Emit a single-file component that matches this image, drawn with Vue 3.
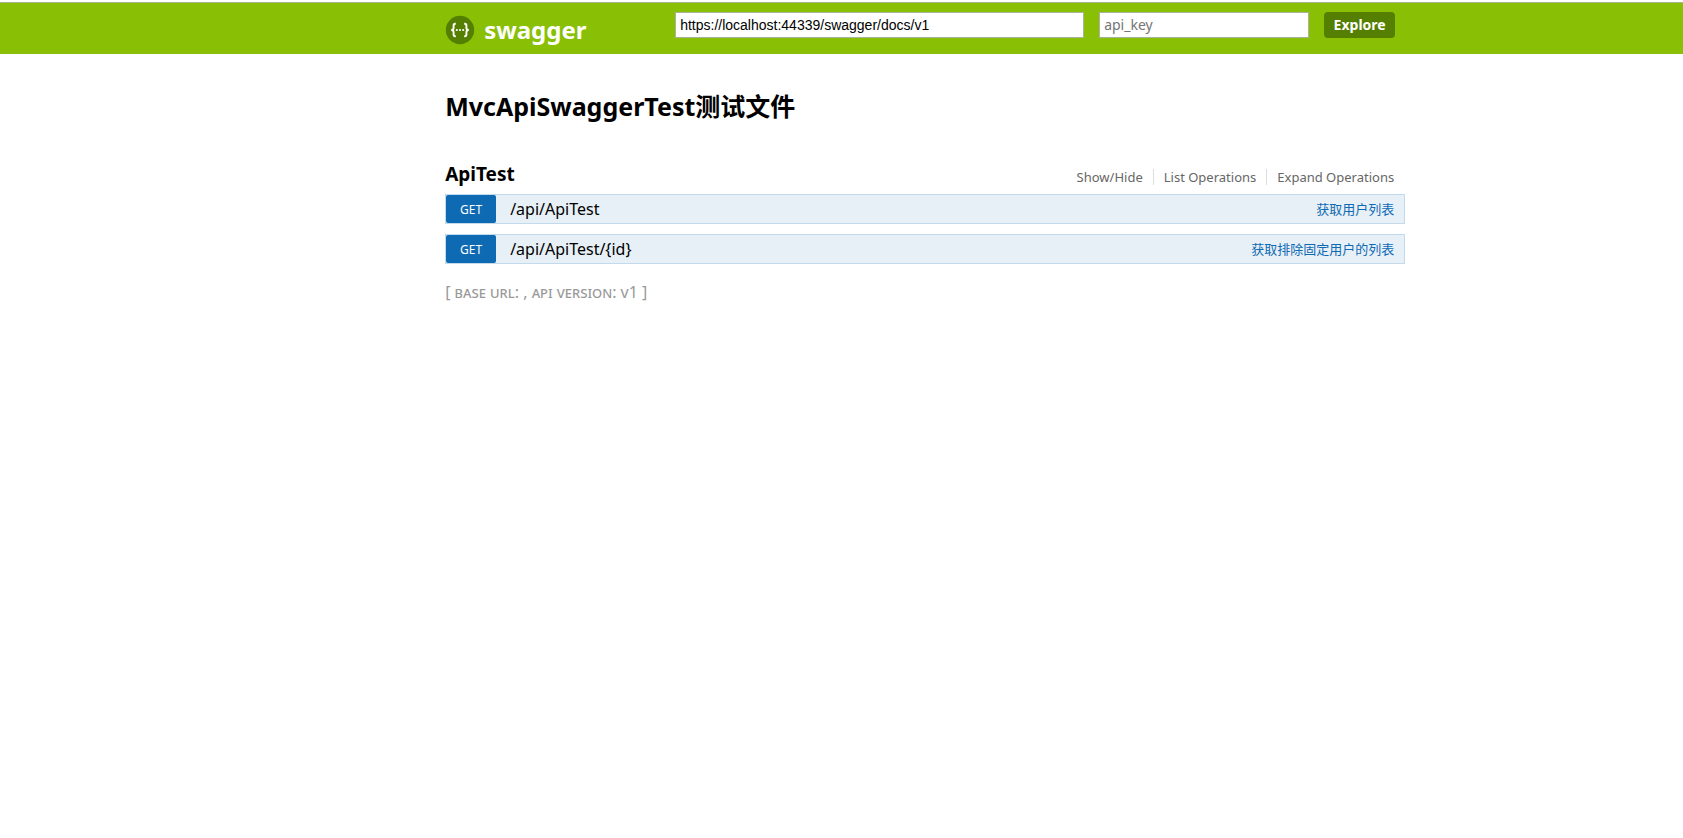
<script setup>
import { ref } from 'vue'

const url = ref('https://localhost:44339/swagger/docs/v1')
const apiKey = ref('')
const actions = ['Show/Hide', 'List Operations', 'Expand Operations']
const operations = [
  { path: '/api/ApiTest', summary: '获取用户列表' },
  { path: '/api/ApiTest/{id}', summary: '获取排除固定用户的列表' },
]
</script>

<template>
  <div class="page">
    <header class="header">
      <div class="wrap bar">
        <a class="logo" href="#">
          <svg class="mark" viewBox="0 0 30 30" aria-hidden="true">
            <circle cx="15" cy="15" r="14.2" fill="#547f00" />
            <g fill="none" stroke="#fff" stroke-width="1.9">
              <path d="M10.8 8.8H10.2Q8.6 8.8 8.6 10.6V12.8Q8.6 15 6.2 15Q8.6 15 8.6 17.2V19.4Q8.6 21.2 10.2 21.2H10.8" />
              <path d="M19.2 8.8H19.8Q21.4 8.8 21.4 10.6V12.8Q21.4 15 23.8 15Q21.4 15 21.4 17.2V19.4Q21.4 21.2 19.8 21.2H19.2" />
            </g>
            <g fill="#fff">
              <circle cx="11.8" cy="15" r="1.1" />
              <circle cx="15" cy="15" r="1.1" />
              <circle cx="18.2" cy="15" r="1.1" />
            </g>
          </svg>
          <span>swagger</span>
        </a>
        <form class="selector" @submit.prevent>
          <input v-model="url" class="field url" type="text" aria-label="Base URL" spellcheck="false" />
          <input v-model="apiKey" class="field key" type="text" placeholder="api_key" aria-label="API key" />
          <button class="explore" type="submit">Explore</button>
        </form>
      </div>
    </header>

    <main class="wrap">
      <h1>MvcApiSwaggerTest测试文件</h1>
      <section>
        <div class="heading">
          <h2><a href="#">ApiTest</a></h2>
          <ul class="options">
            <li v-for="action in actions" :key="action"><a href="#">{{ action }}</a></li>
          </ul>
        </div>
        <ul class="operations">
          <li v-for="op in operations" :key="op.path" class="operation">
            <a class="method" href="#">GET</a>
            <a class="path" href="#">{{ op.path }}</a>
            <a class="summary" href="#">{{ op.summary }}</a>
          </li>
        </ul>
      </section>
      <footer class="footer">[ <span class="caps">base url</span>: , <span class="caps">api version</span>: v1 ]</footer>
    </main>
  </div>
</template>

<style>
body {
  margin: 0;
  background: #fff;
}
</style>

<style scoped>
.page {
  font-family: "Noto Sans", "Noto Sans CJK SC", sans-serif;
  color: #000;
  padding-top: 2px;
}
.page * {
  box-sizing: border-box;
}
a {
  color: inherit;
  text-decoration: none;
}
ul {
  list-style: none;
  margin: 0;
  padding: 0;
}
.wrap {
  max-width: 960px;
  margin-left: 26.45%;
}
.header {
  background: #89bf04;
  border-top: 1px solid #a3b98a;
}
.bar {
  display: flex;
  justify-content: space-between;
  align-items: flex-start;
  height: 51px;
  padding: 9px 10px 0 0;
}
.logo {
  display: flex;
  align-items: center;
  gap: 9px;
  height: 36px;
  color: #fff;
  font-size: 24px;
  line-height: 34px;
  font-weight: 700;
}
.mark {
  width: 30px;
  height: 30px;
}
.selector {
  display: flex;
  gap: 15px;
}
.field {
  height: 26px;
  padding: 3px;
  border: 1px solid #a9b59a;
  border-radius: 0;
  background: #fff;
  color: #000;
  font: 14px "Liberation Sans", Arial, sans-serif;
  outline: none;
}
.field::placeholder {
  color: #757575;
  opacity: 1;
}
.url {
  width: 409px;
  padding-left: 4px;
}
.key {
  width: 210px;
  padding: 2px 4px 4px;
  font-family: "Noto Sans", sans-serif;
}
.explore {
  width: 71px;
  height: 26px;
  padding: 0;
  border: 0;
  border-radius: 4px;
  background: #547f00;
  color: #fff;
  font: 700 14px/26px "Noto Sans", sans-serif;
  cursor: pointer;
}
h1 {
  margin: 34px 0 0;
  font-size: 25px;
  line-height: 36px;
  font-weight: 700;
}
.heading {
  display: flex;
  justify-content: space-between;
  margin-top: 36px;
  height: 34px;
}
h2 {
  margin: 0;
  font-size: 19px;
  line-height: 28px;
  font-weight: 700;
}
.options {
  display: flex;
  align-items: center;
  height: 16px;
  margin: 9px 11px 0 0;
  color: #666;
  font-size: 13px;
  line-height: 16px;
}
.options li + li {
  margin-left: 10px;
  padding-left: 10px;
  border-left: 1px solid #ddd;
}
.operations {
  display: grid;
  gap: 10px;
}
.operation {
  display: flex;
  align-items: center;
  height: 30px;
  padding-right: 10px;
  border: 1px solid #c3d9ec;
  background: #e7f0f7;
}
.method {
  width: 50px;
  height: 28px;
  border-radius: 2px;
  background: #0f6ab4;
  color: #fff;
  font-size: 12px;
  line-height: 30px;
  text-align: center;
}
.path {
  margin-left: 14px;
  font-size: 16px;
  line-height: 28px;
}
.summary {
  margin-left: auto;
  color: #0f6ab4;
  font-size: 13px;
  line-height: 28px;
}
.footer {
  margin-top: 17px;
  color: #999;
  font-size: 16px;
  line-height: 22px;
}
.caps {
  font-variant: small-caps;
}
</style>
